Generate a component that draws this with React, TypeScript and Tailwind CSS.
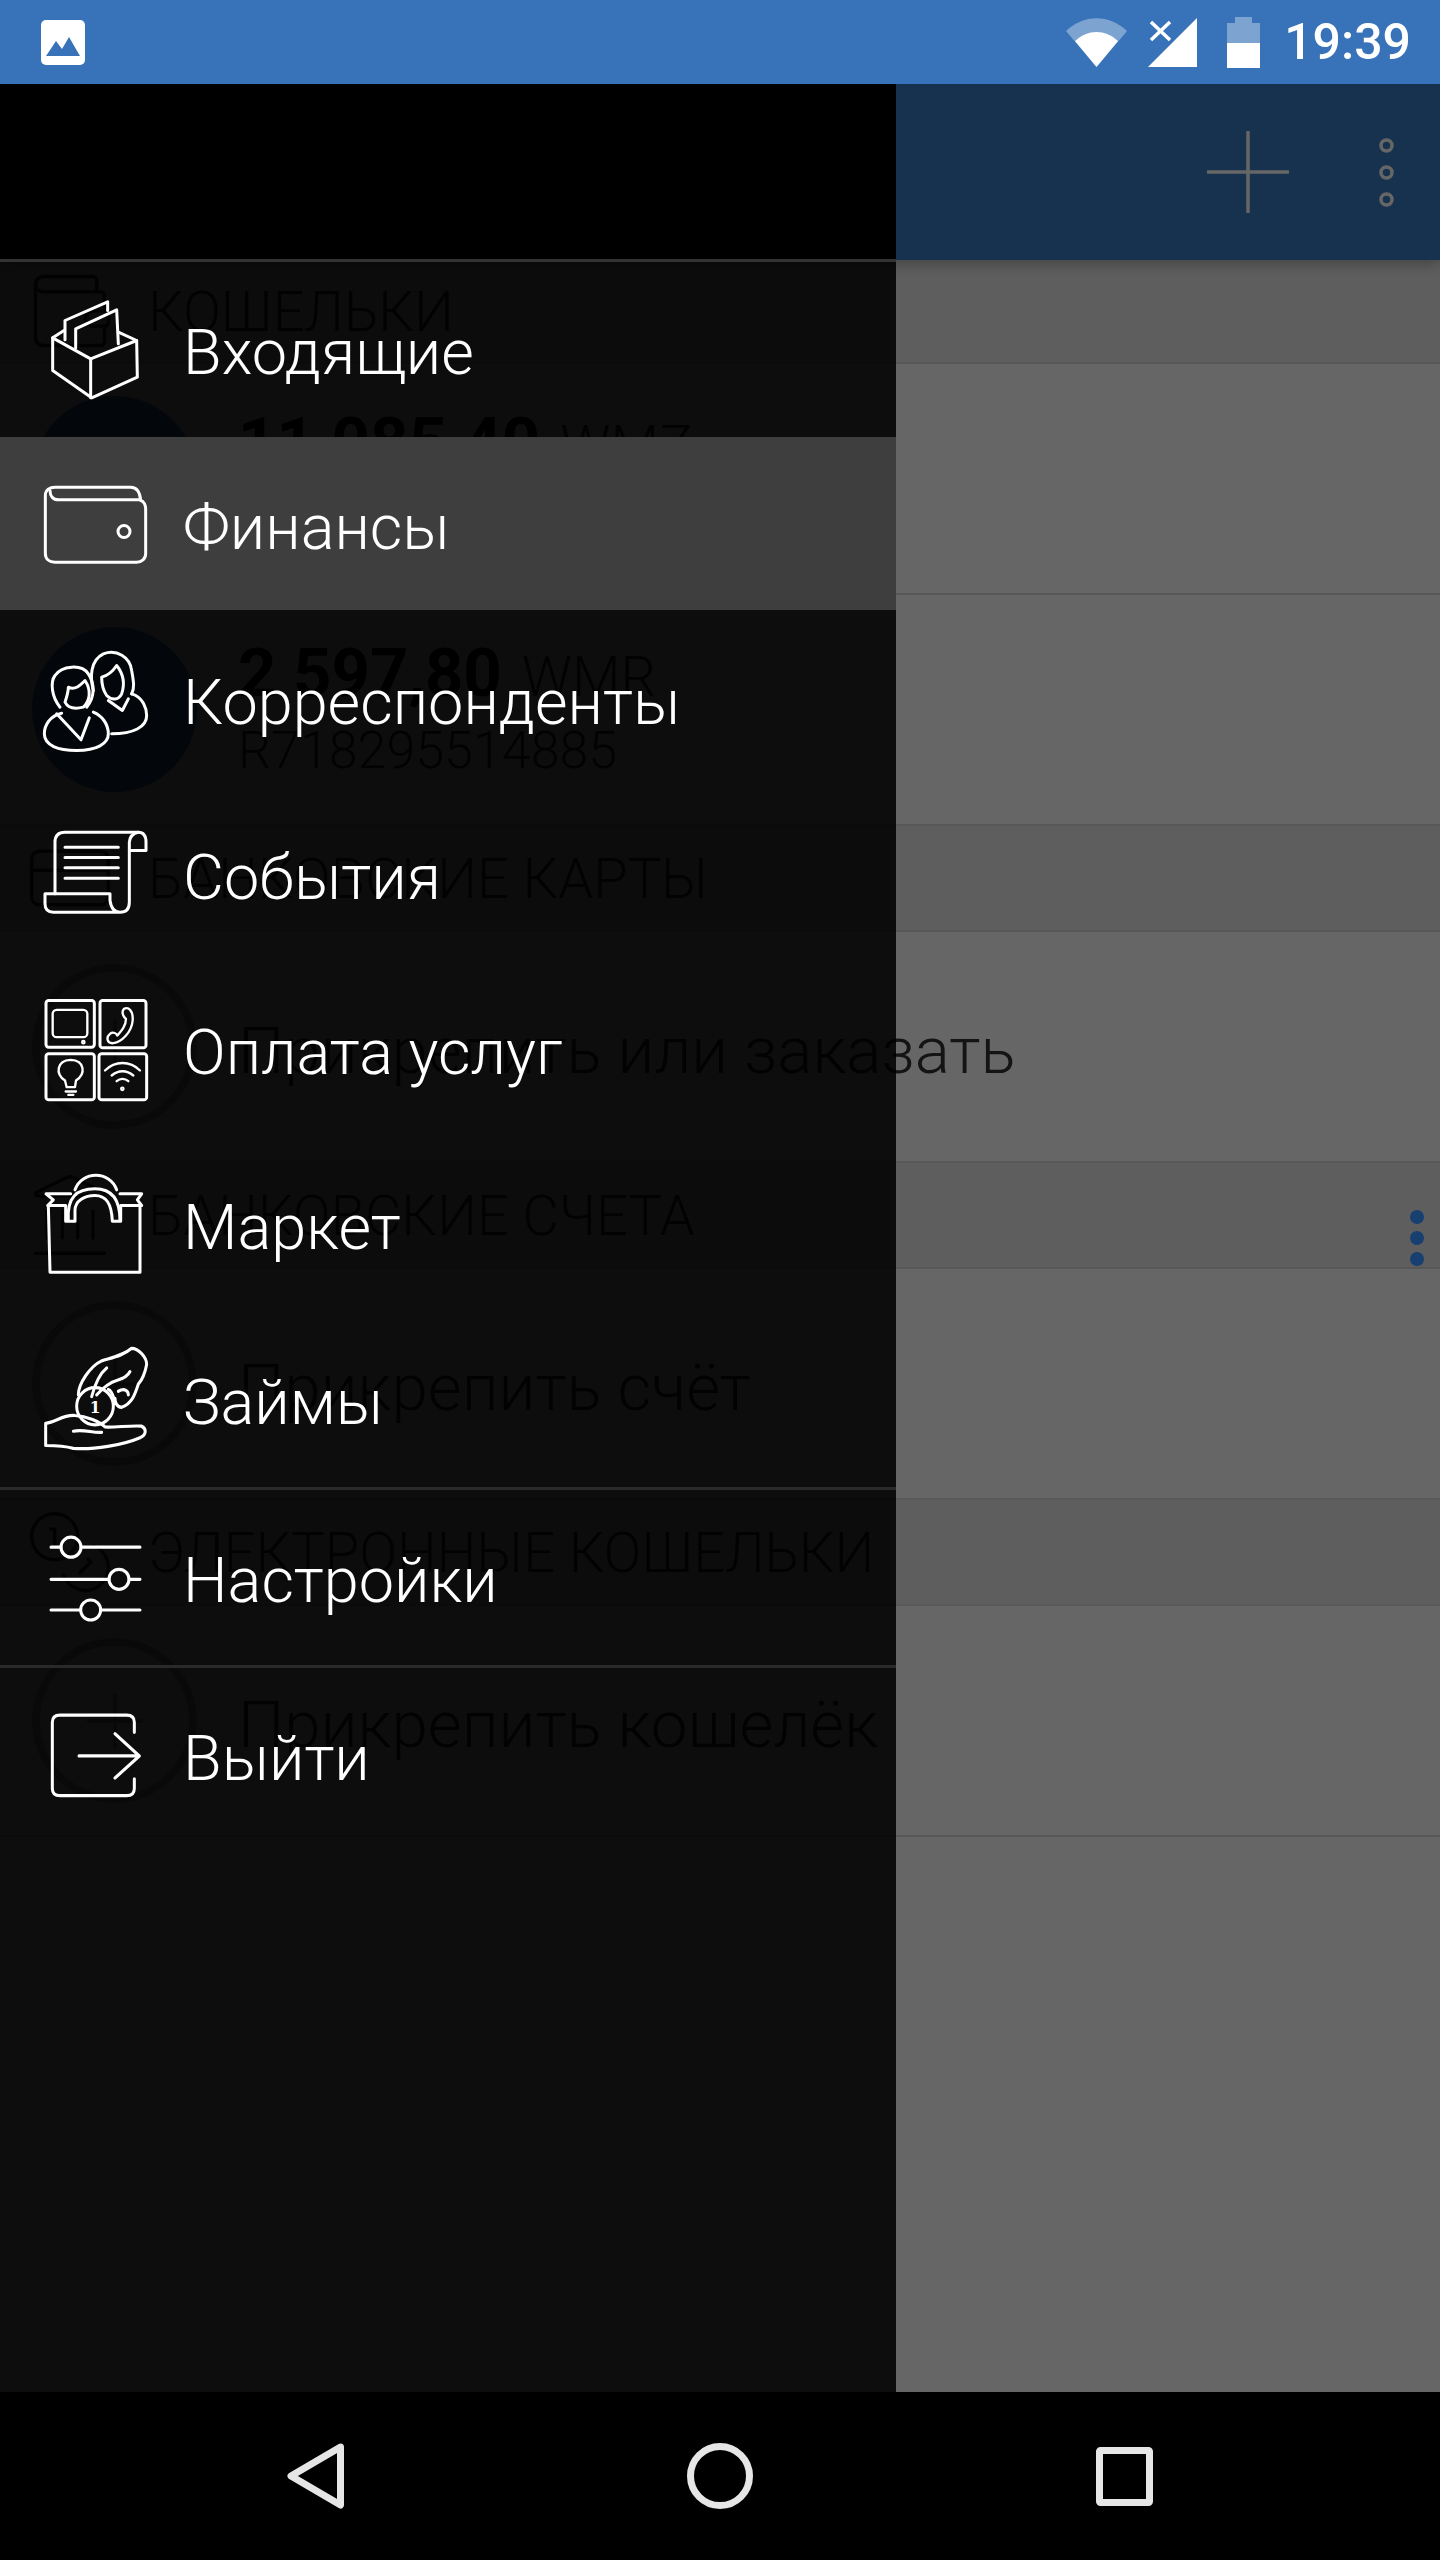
import { CreditCard, Landmark, Coins, Wallet, Plus } from "lucide-react";
import type { ReactNode } from "react";

function Ico({ box, children }: { box: string; children: ReactNode }) {
  return (
    <svg
      viewBox={box}
      preserveAspectRatio="none"
      className="w-[120px] h-[120px] shrink-0"
      fill="none"
      stroke="white"
      strokeWidth={9}
      strokeLinejoin="round"
      strokeLinecap="round"
    >
      {children}
    </svg>
  );
}

const InboxIcon = () => (
  <Ico box="108 85.5 360 360">
    <path d="M158 232 L272 295 L410 240 L412 350 L275 412 L158 330 Z" />
    <path d="M272 295 V412" />
    <path d="M195 238 V180 L323 124 V150" />
    <path d="M227 262 V205 L350 148 L355 250" />
    <path d="M158 232 L192 210 M355 215 L410 240" />
  </Ico>
);

const WalletIcon = () => (
  <Ico box="108 610.5 360 360">
    <path d="M136 705 C136 688 150 680 165 680 H392 C410 680 420 695 422 720 C432 722 437 735 437 745 V880 C437 895 425 905 410 905 H165 C148 905 136 895 136 878 Z" />
    <path d="M150 690 C150 708 160 718 175 718 H422" />
    <circle cx="372" cy="813" r="18" />
  </Ico>
);

const PeopleIcon = () => (
  <Ico box="108 1135.5 360 360">
    <path d="M185 1358 C150 1365 133 1395 133 1420 C133 1455 175 1470 230 1470 C290 1470 325 1450 325 1420 C325 1390 305 1365 280 1355" />
    <path d="M170 1360 L243 1438 L268 1372" />
    <path d="M180 1340 C155 1310 150 1265 165 1245 C185 1215 245 1210 265 1240 C285 1270 285 1310 260 1340" />
    <path d="M205 1280 C225 1290 240 1275 255 1260 C275 1290 270 1320 250 1340 C230 1345 205 1345 195 1325 C200 1310 205 1295 205 1280 Z" />
    <path d="M280 1290 C270 1250 270 1200 310 1180 C350 1165 390 1190 395 1230 C400 1260 405 1280 395 1300" />
    <path d="M305 1250 C325 1245 340 1230 350 1215 C370 1240 375 1270 365 1300 C355 1320 335 1320 320 1305 C310 1290 305 1270 305 1250 Z" />
    <path d="M395 1300 C430 1310 440 1345 440 1365 C440 1400 400 1420 335 1420" />
    <path d="M325 1320 L367 1350 L385 1315" />
  </Ico>
);

const ScrollIcon = () => (
  <Ico box="108 100.5 360 360">
    <path d="M165 340 V185 Q165 155 195 155 H415 Q438 155 438 185 V210 H388" />
    <path d="M415 155 Q390 160 388 185 V365 Q388 395 360 395 H160 Q135 395 135 370 V340 H330 V360 Q335 395 360 395" />
    <path d="M195 200 H355 M195 231 H355 M195 262 H355 M195 293 H355" />
  </Ico>
);

const ServicesIcon = () => (
  <Ico box="108 625.5 360 360">
    <rect x="138" y="660" width="145" height="140" rx="8" />
    <rect x="300" y="660" width="138" height="142" rx="8" />
    <rect x="138" y="820" width="145" height="138" rx="8" />
    <rect x="297" y="820" width="143" height="138" rx="8" />
    <rect x="158" y="688" width="104" height="82" rx="12" strokeWidth={7} />
    <circle cx="250" cy="785" r="4" strokeWidth={6} />
    <path strokeWidth={7} d="M372 685 C385 678 400 690 398 720 C395 755 365 785 340 788 C320 790 318 770 330 760 C340 752 350 760 352 765 C365 750 378 735 378 715 C372 712 362 695 372 685 Z" />
    <path strokeWidth={7} d="M195 900 C165 880 170 840 212 838 C255 840 258 880 228 900 L225 920 H200 Z M197 933 H228 M205 943 H220" />
    <path strokeWidth={7} d="M315 870 C345 840 390 840 420 870 M335 885 C355 868 380 868 400 885 M350 902 C360 893 375 893 385 902" />
    <circle cx="367" cy="925" r="4" strokeWidth={6} />
  </Ico>
);

const BagIcon = () => (
  <Ico box="108 1150.5 360 360">
    <path d="M225 1228 C245 1170 330 1170 350 1228" />
    <path d="M145 1275 L150 1475 H420 L420 1275" />
    <path d="M212 1240 H138 L160 1258 L143 1275 H197 V1322 H225 V1290 C225 1260 255 1245 285 1245 C320 1245 335 1270 337 1322 H362 V1275 H425 L412 1258 L425 1240 H360" />
    <path d="M205 1320 C200 1250 230 1225 285 1225 C340 1225 360 1265 360 1320" />
  </Ico>
);

const LoanIcon = () => (
  <Ico box="108 163.8 360 336">
    <path d="M137 400 C170 395 190 375 225 378 C260 380 300 395 315 410 C340 412 400 405 425 408 C440 415 440 432 420 440 C370 460 280 475 220 470 C190 462 165 462 137 462 Z" />
    <path d="M220 422 C250 415 280 428 305 425" />
    <ellipse cx="285" cy="352" rx="55" ry="52" />
    <text x="285" y="372" textAnchor="middle" fontSize="46" fontWeight="700" fill="white" stroke="none" fontFamily="'DejaVu Serif', serif">1</text>
    <path d="M235 320 C235 290 270 240 305 225 C340 215 370 210 395 190 C415 190 440 215 440 235 C435 260 430 275 415 290 C405 320 395 345 365 355 C350 355 345 340 345 330" />
    <path d="M275 325 C285 290 300 260 320 245 M290 320 C310 300 330 285 350 280 C370 275 385 265 390 255" />
    <path d="M325 305 C340 310 345 345 345 345 M355 310 C375 300 385 310 385 320" />
  </Ico>
);

const SlidersIcon = () => (
  <Ico box="108 663.6 360 336">
    <path d="M153 748 H183 M243 748 H420 M153 838 H327 M387 838 H420 M153 924 H242 M302 924 H420" />
    <ellipse cx="213" cy="748" rx="30" ry="28" />
    <ellipse cx="357" cy="838" rx="30" ry="28" />
    <ellipse cx="272" cy="924" rx="30" ry="28" />
  </Ico>
);

const ExitIcon = () => (
  <Ico box="108 1163.4 360 336">
    <path d="M403 1268 V1240 Q403 1220 380 1220 H180 Q157 1220 157 1240 V1425 Q157 1445 180 1445 H380 Q403 1445 403 1425 V1398" />
    <path d="M237 1334 H418 M345 1272 L418 1334 L345 1396" />
  </Ico>
);

function MenuRow({ icon, label, active }: { icon: ReactNode; label: string; active?: boolean }) {
  return (
    <div className="h-[175px] border-b-2 border-transparent bg-clip-padding">
      <div className={`h-full flex items-center pl-9 ${active ? "bg-[#3e3e3e]" : ""}`}>
        {icon}
        <span className="ml-[27px] pt-[7px] text-[63px] leading-none font-light text-white">{label}</span>
      </div>
    </div>
  );
}

function SectionHead({ icon, title, first }: { icon: ReactNode; title: string; first?: boolean }) {
  return (
    <div className={`flex items-center pl-[24px] bg-[#ececec] border-b-2 border-[#dcdcdc] text-[#333] ${first ? "h-[104px]" : "h-[106px]"}`}>
      <div className="w-[124px] shrink-0">{icon}</div>
      <span className="pt-[2px] text-[56px] leading-none font-light">{title}</span>
    </div>
  );
}

function AddRow({ label }: { label: string }) {
  return (
    <div className="flex items-center pl-8 h-[231px] border-b-2 border-[#dcdcdc] text-[#333]">
      <div className="w-[165px] h-[165px] rounded-full border-8 border-[#b8b8b8] flex items-center justify-center shrink-0">
        <Plus size={90} strokeWidth={1} color="#999" />
      </div>
      <span className="ml-[41px] pt-[8px] text-[65.5px] leading-none font-light whitespace-nowrap">{label}</span>
    </div>
  );
}

function AccountRow({ amount, code, number }: { amount: string; code: string; number: string }) {
  return (
    <div className="flex items-center pl-8 h-[231px] border-b-2 border-[#dcdcdc] text-[#333]">
      <div className="w-[165px] h-[165px] rounded-full bg-[#3a7dc5] shrink-0" />
      <div className="ml-[41px] flex flex-col gap-[12px]">
        <div className="flex items-baseline gap-5 text-[67px] leading-[66px]">
          <span className="font-bold text-black">{amount}</span>
          <span className="font-light text-[56px]">{code}</span>
        </div>
        <span className="text-[52px] leading-[58px] font-light">{number}</span>
      </div>
    </div>
  );
}

export default function App() {
  return (
    <div className="w-[1440px] h-[2560px] flex flex-col overflow-hidden bg-white font-['Roboto',sans-serif]">
      {/* status bar */}
      <div className="h-[84px] shrink-0 bg-[#3873b9] flex items-center justify-between pl-[41px] pr-[29px] z-30">
        <svg width="44" height="45" viewBox="0 0 44 45">
          <rect width="44" height="45" rx="5" fill="white" />
          <path d="M5 36 L15 21 L21 29 L28 17 L39 36 Z" fill="#3873b9" />
        </svg>
        <div className="flex items-center">
          <svg width="61" height="49" viewBox="0 0 61 49">
            <path d="M0 13 C18 -4 43 -4 61 13 L30.5 49 Z" fill="white" fillOpacity="0.35" />
            <path d="M9 23 C22 11 39 11 52 23 L30.5 49 Z" fill="white" />
          </svg>
          <svg className="ml-[21px]" width="49" height="49" viewBox="0 0 49 49">
            <path d="M49 0 V49 H0 Z" fill="white" />
            <path d="M3 4 L22 22 M22 4 L3 22" stroke="white" strokeWidth="3.5" />
          </svg>
          <svg className="ml-[30px]" width="33" height="51" viewBox="0 0 33 51">
            <path d="M8 0 H25 V6 H33 V26 H0 V6 H8 Z" fill="white" fillOpacity="0.35" />
            <rect y="26" width="33" height="25" fill="white" />
          </svg>
          <span className="ml-[24px] text-[50px] leading-none font-medium text-white">19:39</span>
        </div>
      </div>

      <div className="flex-1 min-h-0 relative">
        {/* page under the drawer */}
        <div className="h-[176px] bg-[#3a7dc5] flex items-center justify-end pr-[46px] relative z-10 shadow-[0_4px_14px_rgba(0,0,0,0.3)]">
          <svg width="82" height="82" viewBox="0 0 82 82" stroke="white" strokeWidth="3.5" strokeLinecap="round">
            <path d="M41 1 V81 M1 41 H81" />
          </svg>
          <svg className="ml-[90px]" width="15" height="69" viewBox="0 0 15 69" fill="none" stroke="white" strokeWidth="3.5">
            <circle cx="7.5" cy="7.5" r="5.5" />
            <circle cx="7.5" cy="34.5" r="5.5" />
            <circle cx="7.5" cy="61.5" r="5.5" />
          </svg>
        </div>
        <SectionHead first icon={<Wallet size={92} strokeWidth={0.9} />} title="КОШЕЛЬКИ" />
        <AccountRow amount="11 085,40" code="WMZ" number="Z316289551482" />
        <AccountRow amount="2 597,80" code="WMR" number="R718295514885" />
        <SectionHead icon={<CreditCard size={92} strokeWidth={0.9} />} title="БАНКОВСКИЕ КАРТЫ" />
        <AddRow label="Прикрепить или заказать" />
        <SectionHead icon={<Landmark size={92} strokeWidth={0.9} />} title="БАНКОВСКИЕ СЧЕТА" />
        <AddRow label="Прикрепить счёт" />
        <SectionHead icon={<Coins size={92} strokeWidth={0.9} />} title="ЭЛЕКТРОННЫЕ КОШЕЛЬКИ" />
        <AddRow label="Прикрепить кошелёк" />

        {/* scrim */}
        <div className="absolute inset-0 z-20 bg-black/60" />

        <div className="absolute right-4 top-[1126px] z-20 flex flex-col gap-[7px]">
          <div className="w-[14px] h-[14px] rounded-full bg-[#174070]" />
          <div className="w-[14px] h-[14px] rounded-full bg-[#174070]" />
          <div className="w-[14px] h-[14px] rounded-full bg-[#174070]" />
        </div>

        {/* drawer */}
        <div className="absolute left-0 top-0 bottom-0 w-[896px] z-20 bg-black/87">
          <div className="h-[178px] bg-black border-b-[3px] border-[#333]" />
          <MenuRow icon={<InboxIcon />} label="Входящие" />
          <MenuRow icon={<WalletIcon />} label="Финансы" active />
          <MenuRow icon={<PeopleIcon />} label="Корреспонденты" />
          <MenuRow icon={<ScrollIcon />} label="События" />
          <MenuRow icon={<ServicesIcon />} label="Оплата услуг" />
          <MenuRow icon={<BagIcon />} label="Маркет" />
          <MenuRow icon={<LoanIcon />} label="Займы" />
          <div className="border-t-[3px] border-[#2a2a2a]">
            <MenuRow icon={<SlidersIcon />} label="Настройки" />
          </div>
          <div className="border-t-[3px] border-[#2a2a2a]">
            <MenuRow icon={<ExitIcon />} label="Выйти" />
          </div>
        </div>
      </div>

      {/* nav bar */}
      <div className="h-[168px] shrink-0 bg-black flex items-center justify-center gap-[343px] z-30">
        <svg width="57" height="66" viewBox="0 0 57 66" fill="none" stroke="#e6e6e6" strokeWidth="7" strokeLinejoin="round">
          <path d="M53.5 4 L4 33 L53.5 62 Z" />
        </svg>
        <svg width="66" height="66" viewBox="0 0 66 66" fill="none" stroke="#e6e6e6" strokeWidth="7">
          <circle cx="33" cy="33" r="29.5" />
        </svg>
        <svg width="57" height="59" viewBox="0 0 57 59" fill="none" stroke="#e6e6e6" strokeWidth="7">
          <rect x="3.5" y="3.5" width="50" height="52" rx="1" />
        </svg>
      </div>
    </div>
  );
}
